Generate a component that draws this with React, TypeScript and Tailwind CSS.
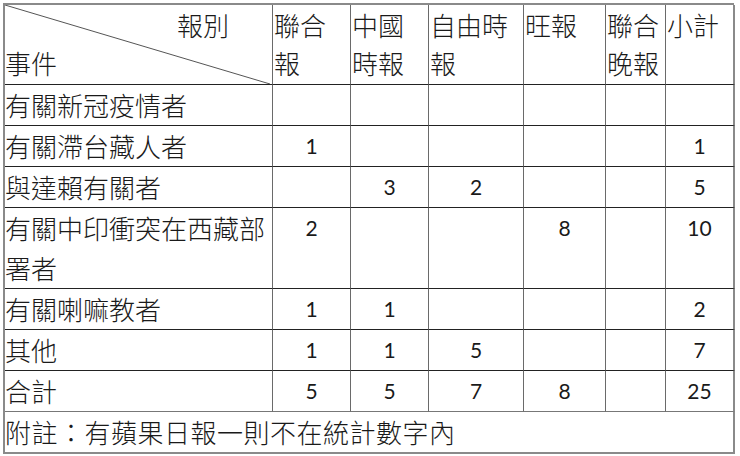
import React from "react";

const cjk = "font-['Noto_Sans_CJK_TC','Noto_Sans_CJK_SC',sans-serif]";
const num = "font-['Lato','Open_Sans',sans-serif] text-[21px] font-normal";

type Row = { label: string[]; vals: string[]; tall?: boolean };

const rows: Row[] = [
  { label: ["有關新冠疫情者"], vals: ["", "", "", "", "", ""] },
  { label: ["有關滯台藏人者"], vals: ["1", "", "", "", "", "1"] },
  { label: ["與達賴有關者"], vals: ["", "3", "2", "", "", "5"] },
  { label: ["有關中印衝突在西藏部", "署者"], vals: ["2", "", "", "8", "", "10"], tall: true },
  { label: ["有關喇嘛教者"], vals: ["1", "1", "", "", "", "2"] },
  { label: ["其他"], vals: ["1", "1", "5", "", "", "7"] },
  { label: ["合計"], vals: ["5", "5", "7", "8", "", "25"] },
];

const headers = [["聯合", "報"], ["中國", "時報"], ["自由時", "報"], ["旺報"], ["聯合", "晚報"], ["小計"]];

export default function App() {
  return (
    <div className="w-[740px] h-[456px] bg-white pt-[3px] pl-[3px] text-[#1a1a1a]">
      <div
        className={`grid grid-cols-[268px_78px_78px_95px_82px_60px_69px] grid-rows-[80px_41px_41px_41px_81px_41px_41px_41px_42px] border-l-2 border-t-2 border-[#8a8a8a] w-[731px] ${cjk} text-[26px] font-light`}
      >
        {/* header */}
        <div className="relative border-r border-b border-r-[#6a6a6a] border-b-[#222] leading-[38px] pt-[1px]">
          <svg className="absolute inset-0" width="268" height="79" viewBox="0 0 268 79">
            <line x1="0" y1="0" x2="265" y2="79" stroke="#555" strokeWidth="1" />
          </svg>
          <div className="pl-[172px]">報別</div>
          <div className="pl-0">事件</div>
        </div>
        {headers.map((h, i) => (
          <div
            key={i}
            className={`border-b border-b-[#222] leading-[38px] pt-[1px] pl-[1px] ${
              i === headers.length - 1 ? "border-r-2 border-r-[#8a8a8a]" : "border-r border-r-[#6a6a6a]"
            }`}
          >
            {h.map((t, j) => (
              <div key={j}>{t}</div>
            ))}
          </div>
        ))}
        {rows.map((r, ri) => (
          <React.Fragment key={ri}>
            <div
              className={`border-r border-r-[#6a6a6a] border-b ${
                ri === rows.length - 1 ? "border-b-[#777]" : "border-b-[#222]"
              } leading-[40px]`}
            >
              {r.label.map((t, j) => (
                <div key={j}>{t}</div>
              ))}
            </div>
            {r.vals.map((v, vi) => (
              <div
                key={vi}
                className={`border-b ${ri === rows.length - 1 ? "border-b-[#777]" : "border-b-[#222]"} ${
                  vi === r.vals.length - 1 ? "border-r-2 border-r-[#8a8a8a]" : "border-r border-r-[#6a6a6a]"
                } ${num} leading-[40px] text-center`}
              >
                {v}
              </div>
            ))}
          </React.Fragment>
        ))}
        <div className="col-span-7 border-r-2 border-b-2 border-[#8a8a8a] leading-[40px] tracking-[0.5px]">
          附註：有蘋果日報一則不在統計數字內
        </div>
      </div>
    </div>
  );
}
